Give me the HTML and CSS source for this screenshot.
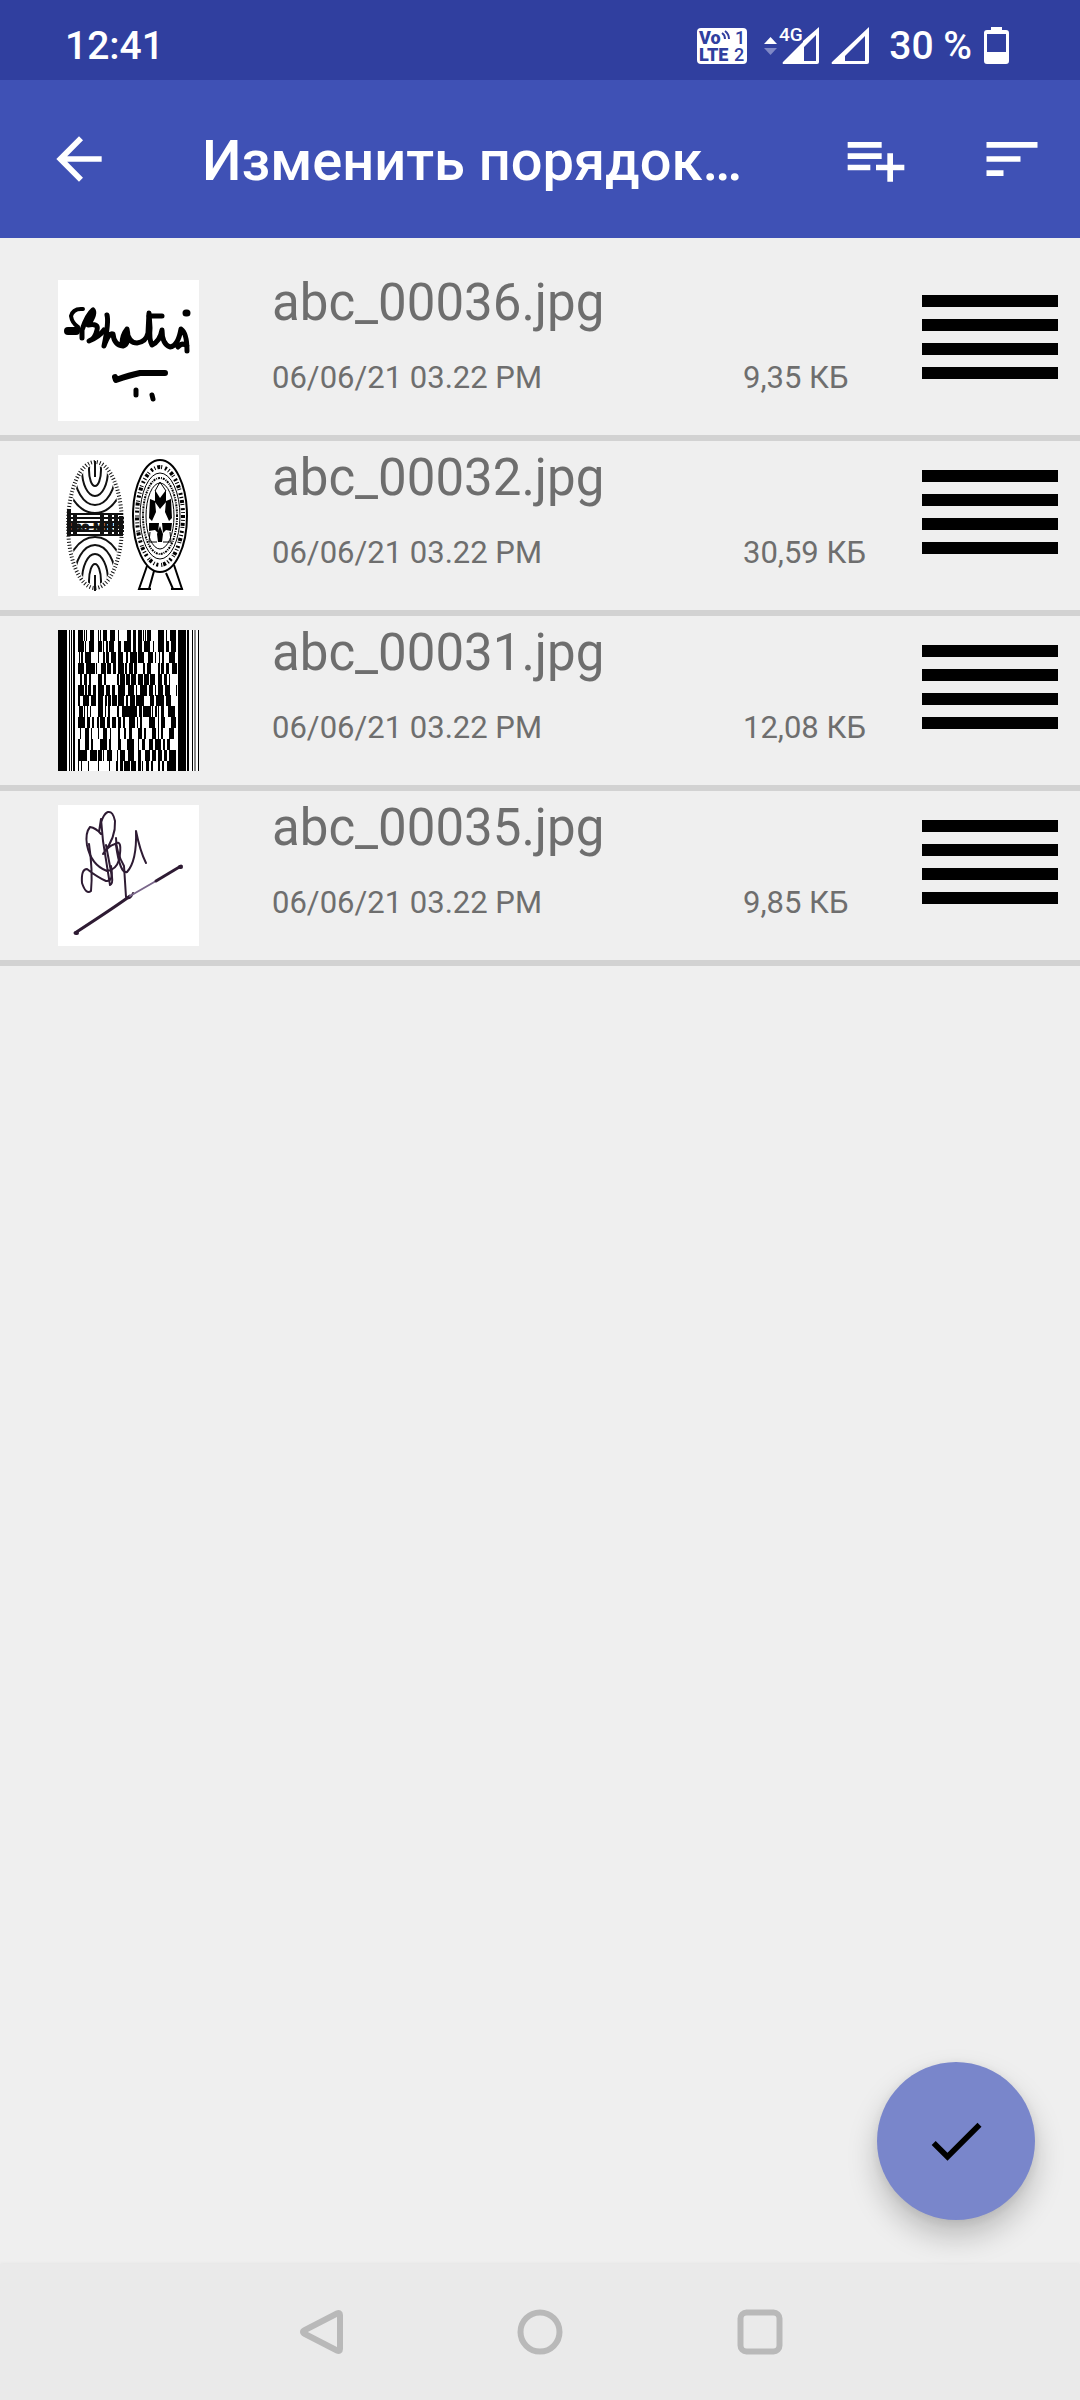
FILE: index.html
```
<!DOCTYPE html>
<html lang="ru">
<head>
    <meta charset="UTF-8">
    <meta name="viewport" content="width=device-width, initial-scale=1.0">
    <title>Изменить порядок</title>
    <link rel="stylesheet" href="styles.css">
</head>
<body>
    <div class="status-bar">
        <span class="clock">12:41</span>
        <div class="status-icons">
            <svg class="volte" width="50" height="36" viewBox="0 0 50 36">
                <rect width="50" height="36" rx="4" fill="#fff"/>
                <g fill="#303f9f" font-family="Roboto, sans-serif" font-weight="900">
                    <text x="2" y="16" font-size="18">Vo</text>
                    <text x="2" y="33" font-size="18">LTE</text>
                    <text x="38" y="16" font-size="18" font-weight="500">1</text>
                    <text x="37" y="33" font-size="18" font-weight="500">2</text>
                </g>
                <path d="M25 5q3 2 3 6M28 3q4 3 4 8" fill="none" stroke="#303f9f" stroke-width="2"/>
            </svg>
            <svg class="signal" width="56" height="38" viewBox="0 0 56 38">
                <path d="M0 17l6.500-7 6.500 7z" fill="#fff"/>
                <path d="M0 21h13l-6.500 7z" fill="#7f88c6"/>
                <text x="15" y="14" font-size="19" font-weight="500" font-family="Roboto, sans-serif" fill="#fff">4G</text>
                <path fill="#fff" fill-rule="evenodd" d="M55 0v35q0 2-2 2H19q-1-1 0-2L39 15V14zM52 8L40 20V34H52z"/>
            </svg>
            <svg class="signal2" width="38" height="38" viewBox="0 0 38 38">
                <path fill="#fff" fill-rule="evenodd" d="M38 0v35q0 2-2 2H1q-1-1 0-2zM34 9L14 29V34H34z"/>
            </svg>
            <span class="percent">30 %</span>
            <svg width="25" height="38" viewBox="0 0 25 38">
                <path fill="#fff" fill-rule="evenodd" d="M7 0h11v3h4q3 0 3 3v28q0 3-3 3H3q-3 0-3-3V6q0-3 3-3h4zM3 7v18h19V7z"/>
            </svg>
        </div>
    </div>

    <header class="app-bar">
        <button class="icon-btn" type="button" aria-label="Назад">
            <svg viewBox="0 0 24 24"><path d="M20 11H7.830l5.590-5.590L12 4l-8 8 8 8 1.410-1.410L7.830 13H20v-2z"/></svg>
        </button>
        <h1>Изменить порядок…</h1>
        <button class="icon-btn" type="button" aria-label="Добавить">
            <svg viewBox="0 0 24 24"><path d="M14 10H2v2h12v-2zm0-4H2v2h12V6zm4 8v-4h-2v4h-4v2h4v4h2v-4h4v-2h-4zM2 16h8v-2H2v2z"/></svg>
        </button>
        <button class="icon-btn sort" type="button" aria-label="Сортировать">
            <svg viewBox="0 0 24 24"><path d="M3 18h6v-2H3v2zM3 6v2h18V6H3zm0 7h12v-2H3v2z"/></svg>
        </button>
    </header>

    <main>
        <ul class="file-list">
            <li>
                <svg class="thumb" viewBox="0 0 141 141">
                    <!-- signature -->
                    <g fill="none" stroke="#000" stroke-linecap="round" stroke-linejoin="round">
                        <path stroke-width="4" d="M25 29Q15 28 13 36Q14 43 20 47Q22 51 9 51"/>
                        <path stroke-width="8" d="M10 51h8"/>
                        <path stroke-width="5" d="M24 58L24 50Q29 35 35 30Q38 34 30 45Q41 43 39 50Q37 59 31 61Q42 56 46 50"/>
                        <path stroke-width="5" d="M49 35Q51 42 46 66Q51 52 55 54Q56 65 65 66Q72 64 69 49Q64 55 64 64M69 52Q71 63 79 63Q88 62 90 53L91 33L92 48Q91 60 94 65Q102 61 104 50Q104 64 112 67Q120 66 123 49Q129 53 129 71M120 67Q124 62 129 66"/>
                        <path stroke-width="5" d="M91 36h13"/>
                        <path stroke-width="7" d="M128 33h1M66 60v3"/>
                        <path stroke-width="6" d="M57 97l1 3Q72 95 82 93H107"/>
                        <path stroke-width="5" d="M78 110v5M94 115l1 4"/>
                    </g>
                </svg>
                <div class="info">
                    <span class="name">abc_00036.jpg</span>
                    <div class="meta"><span class="date">06/06/21 03.22 PM</span><span class="size">9,35 КБ</span></div>
                </div>
                <button class="handle" type="button" aria-label="Переместить"><i></i><i></i><i></i><i></i></button>
            </li>
            <li>
                <svg class="thumb" viewBox="0 0 141 141">
                    <!-- round accreditation mark -->
                    <clipPath id="oval"><ellipse cx="37" cy="70" rx="24" ry="60"/></clipPath>
                    <g fill="none" stroke="#111">
                        <ellipse cx="37" cy="70" rx="27" ry="63" stroke-width="4" stroke-dasharray="1 2"/>
                        <g clip-path="url(#oval)" stroke-width="2">
                            <ellipse cx="37" cy="15" rx="6" ry="16"/>
                            <ellipse cx="37" cy="15" rx="13" ry="26"/>
                            <ellipse cx="37" cy="15" rx="21" ry="35"/>
                            <ellipse cx="37" cy="15" rx="30" ry="43"/>
                            <ellipse cx="37" cy="126" rx="6" ry="17"/>
                            <ellipse cx="37" cy="126" rx="13" ry="27"/>
                            <ellipse cx="37" cy="126" rx="21" ry="36"/>
                            <ellipse cx="37" cy="126" rx="30" ry="44"/>
                        </g>
                        <path stroke-width="2" d="M37 6v16M37 120v16"/>
                        <path stroke-width="2" d="M10 59h55M9 63h57M9 67h57M9 72h57M9 76h57M10 80h55"/>
                        <path stroke-width="4" d="M11 54v27M17 58v23M44 59v22M52 58v23M58 59v22M63 61v20"/>
                    </g>
                    <text class="mark" x="37" y="76" text-anchor="middle">ilac-MRA</text>
                    <!-- seal with a star -->
                    <g fill="none" stroke="#000">
                        <path stroke-width="2" d="M89 111L81 134H91L96 116M108 118L115 134H124L116 110"/>
                        <path stroke-width="2" d="M81 134h12M113 134h12"/>
                        <ellipse cx="102" cy="61" rx="27" ry="56" fill="#fff" stroke-width="2"/>
                        <ellipse cx="102" cy="61" rx="23" ry="49" stroke-width="4" stroke-dasharray="2 2 1 2 3 1 1 3"/>
                        <ellipse cx="102" cy="61" rx="20" ry="43"/>
                        <ellipse cx="102" cy="61" rx="17" ry="38" stroke-width="2" stroke-dasharray="1 1 2 1"/>
                        <ellipse cx="102" cy="61" rx="14" ry="33"/>
                        <path d="M97 36L102 27L108 36M92 77L91 87H99M112 77L113 87H105"/>
                    </g>
                    <path d="M97 35L102 43L108 35V47L102 54L97 47zM92 44L97 46L98 57L94 66L91 63zM113 44L108 46L107 57L111 66L114 63zM91 68H101L100 78L97 75L91 76zM104 68H114L113 76L108 75L105 78zM102 71L105 79L104 87H100L99 79z"/>
                </svg>
                <div class="info">
                    <span class="name">abc_00032.jpg</span>
                    <div class="meta"><span class="date">06/06/21 03.22 PM</span><span class="size">30,59 КБ</span></div>
                </div>
                <button class="handle" type="button" aria-label="Переместить"><i></i><i></i><i></i><i></i></button>
            </li>
            <li>
                <svg class="thumb" viewBox="0 0 141 141" shape-rendering="crispEdges">
                    <!-- stacked barcode: start and stop columns, then thirteen rows -->
                    <path d="M0 0h9v141H0zM11 0h1v141h-1zM13 0h1v141h-1zM15 0h2v141h-2zM120 0h8v141h-8zM129 0h2v141h-2zM134 0h1v141h-1zM140 0h1v141h-1z"/>
                    <path d="M136 0h2v141h-2z" fill="#888"/>
                    <g fill="none" stroke="#000" stroke-width="11">
                        <path d="M20 5h5M26 5h1M28 5h1M32 5h4M40 5h1M42 5h1M45 5h4M52 5h5M60 5h1M69 5h4M75 5h3M80 5h4M85 5h1M87 5h1M89 5h4M100 5h6M108 5h1M112 5h6"/>
                        <path d="M20 16h6M27 16h1M31 16h5M40 16h4M45 16h1M48 16h2M51 16h5M60 16h3M66 16h7M75 16h3M80 16h4M86 16h6M95 16h1M100 16h6M108 16h3M113 16h5"/>
                        <path d="M21 27h1M23 27h2M27 27h6M40 27h1M45 27h2M48 27h3M53 27h5M60 27h5M68 27h2M72 27h7M80 27h6M90 27h5M97 27h1M101 27h1M104 27h2M111 27h6"/>
                        <path d="M20 38h6M28 38h9M38 38h1M43 38h5M49 38h4M55 38h3M60 38h6M67 38h2M71 38h4M76 38h3M85 38h2M89 38h4M100 38h2M103 38h3M108 38h3M114 38h5"/>
                        <path d="M22 49h2M26 49h3M31 49h2M40 49h4M46 49h2M59 49h2M62 49h5M68 49h4M73 49h5M80 49h5M86 49h5M92 49h5M100 49h4M106 49h3M111 49h1"/>
                        <path d="M20 60h6M27 60h2M30 60h3M35 60h3M40 60h6M48 60h4M54 60h3M60 60h7M70 60h6M78 60h1M82 60h7M91 60h4M97 60h1M100 60h5M107 60h5M118 60h1"/>
                        <path d="M20 70h2M25 70h6M33 70h5M40 70h5M47 70h2M50 70h3M54 70h5M60 70h6M68 70h2M72 70h5M78 70h8M92 70h4M98 70h8M108 70h5"/>
                        <path d="M21 81h4M26 81h1M29 81h1M32 81h1M40 81h5M47 81h1M50 81h2M59 81h2M64 81h15M81 81h3M85 81h8M94 81h1M97 81h2M100 81h1M103 81h3M110 81h7"/>
                        <path d="M20 92h7M29 92h3M34 92h2M39 92h2M42 92h5M49 92h3M54 92h4M60 92h3M65 92h2M71 92h6M79 92h1M82 92h2M91 92h6M100 92h1M103 92h4M113 92h5"/>
                        <path d="M22 103h1M27 103h4M33 103h1M40 103h1M45 103h4M52 103h1M60 103h2M66 103h2M71 103h3M80 103h4M86 103h2M94 103h4M100 103h1M103 103h2M111 103h5"/>
                        <path d="M20 114h2M27 114h4M33 114h2M42 114h7M51 114h2M60 114h3M69 114h7M80 114h1M84 114h3M91 114h4M97 114h6M105 114h2M109 114h3"/>
                        <path d="M20 125h9M32 125h7M40 125h4M45 125h1M49 125h5M59 125h1M62 125h5M70 125h6M80 125h3M87 125h5M94 125h4M100 125h4M106 125h3M111 125h7"/>
                        <path d="M20 136h1M23 136h1M30 136h1M40 136h1M51 136h1M58 136h2M62 136h3M66 136h6M73 136h5M80 136h3M84 136h1M88 136h3M93 136h2M100 136h2M104 136h2M109 136h9"/>
                    </g>
                </svg>
                <div class="info">
                    <span class="name">abc_00031.jpg</span>
                    <div class="meta"><span class="date">06/06/21 03.22 PM</span><span class="size">12,08 КБ</span></div>
                </div>
                <button class="handle" type="button" aria-label="Переместить"><i></i><i></i><i></i><i></i></button>
            </li>
            <li>
                <svg class="thumb" viewBox="0 0 141 141">
                    <!-- pen signature -->
                    <g fill="none" stroke="#2e1b33" stroke-width="2" stroke-linecap="round" stroke-linejoin="round">
                        <path d="M43 29Q38 23 32 22Q27 28 29 40Q33 60 49 66Q58 65 61 55Q65 33 57 39Q50 41 45 49Q58 33 57 16Q55 6 50 7Q44 9 41 27L43 14M43 14L45 36L52 80Q55 79 54 72L48 40"/>
                        <path d="M31 39Q35 66 33 86Q28 90 24 78Q23 64 29 64Q39 72 48 76Q56 77 53 61M58 33Q58 47 66 61L68 92Q72 96 75 88"/>
                        <path d="M58 40Q62 69 69 67Q79 56 78 26Q82 46 88 58"/>
                        <path d="M17 128Q60 100 72 91" stroke-width="3"/>
                        <path d="M72 91L98 76" stroke="#79668a"/>
                        <path d="M98 76L123 61" stroke-width="3"/>
                        <path d="M18 128h1M122 62h1" stroke-width="4"/>
                    </g>
                </svg>
                <div class="info">
                    <span class="name">abc_00035.jpg</span>
                    <div class="meta"><span class="date">06/06/21 03.22 PM</span><span class="size">9,85 КБ</span></div>
                </div>
                <button class="handle" type="button" aria-label="Переместить"><i></i><i></i><i></i><i></i></button>
            </li>
        </ul>
    </main>

    <button class="fab" type="button" aria-label="Готово">
        <svg viewBox="0 0 24 24"><path d="M9 16.170L4.830 12l-1.420 1.410L9 19 21 7l-1.410-1.410z"/></svg>
    </button>

    <nav class="nav-bar">
        <button type="button" aria-label="Назад">
            <svg viewBox="0 0 46 46"><path d="M40 4.500Q43 3 43 6V40Q43 43 40 41.500L8 25Q4 23 8 21z" stroke-linejoin="round"/></svg>
        </button>
        <button type="button" aria-label="Домой">
            <svg viewBox="0 0 46 46"><circle cx="23" cy="23" r="19.500"/></svg>
        </button>
        <button type="button" aria-label="Недавние">
            <svg viewBox="0 0 46 46"><rect x="3.500" y="3.500" width="39" height="39" rx="6"/></svg>
        </button>
    </nav>
</body>
</html>
```
FILE: styles.css
```
* {
    box-sizing: border-box;
}

body {
    margin: 0;
    min-height: 100vh;
    display: flex;
    flex-direction: column;
    font-family: Roboto, sans-serif;
    background-color: #efefef;
    color: #6e6e6e;
}

button {
    padding: 0;
    border: none;
    background: none;
    cursor: pointer;
}

svg {
    display: block;
    flex-shrink: 0;
}

/* status bar */
.status-bar {
    height: 80px;
    padding: 12px 71px 0 65px;
    display: flex;
    justify-content: space-between;
    align-items: center;
    background-color: #303f9f;
    color: #fff;
    font-size: 39px;
    font-weight: 500;
}

.status-icons {
    display: flex;
    align-items: center;
}

.status-icons svg {
    overflow: visible;
}

.signal {
    margin-left: 17px;
}

.signal2 {
    margin-left: 11px;
}

.percent {
    margin: 0 12px 0 20px;
}

/* app bar */
.app-bar {
    height: 158px;
    padding: 0 34px 0 45px;
    display: flex;
    align-items: center;
    background-color: #3f51b5;
    color: #fff;
}

.app-bar h1 {
    flex: 1;
    margin: 0 0 0 89px;
    padding-top: 4px;
    font-size: 56px;
    line-height: 66px;
    font-weight: 500;
    white-space: nowrap;
    overflow: hidden;
    text-overflow: ellipsis;
}

.icon-btn svg {
    width: 68px;
    height: 68px;
    fill: #fff;
}

.sort {
    margin-left: 68px;
}

/* file list */
main {
    flex: 1;
}

.file-list {
    list-style: none;
    margin: 0;
    padding: 28px 0 0;
}

.file-list li {
    display: flex;
    align-items: flex-start;
    padding: 0 22px 14px 58px;
    border-bottom: 6px solid #d2d2d2;
}

.thumb {
    width: 141px;
    height: 141px;
    margin-top: 14px;
    background-color: #fff;
}

.mark {
    font-family: "Liberation Sans Narrow", "Liberation Sans", sans-serif;
    font-size: 13px;
    font-weight: bold;
    fill: #111;
    stroke: #111;
}

.info {
    flex: 1;
    margin-left: 73px;
    padding-top: 7px;
}

.name {
    display: block;
    font-size: 51px;
    line-height: 60px;
}

.meta {
    display: flex;
    margin-top: 27px;
    font-size: 31px;
    line-height: 36px;
}

.date {
    flex: 1;
}

.size {
    width: 179px;
}

.handle {
    width: 136px;
    height: 84px;
    margin-top: 29px;
    display: flex;
    flex-direction: column;
    justify-content: space-between;
}

.handle i {
    width: 100%;
    height: 12px;
    background-color: #000;
}

.fab {
    position: fixed;
    right: 45px;
    bottom: 180px;
    width: 158px;
    height: 158px;
    display: flex;
    justify-content: center;
    align-items: center;
    border-radius: 50%;
    background-color: #7986cb;
    box-shadow: 0 16px 30px rgba(0, 0, 0, 0.22), 0 2px 12px rgba(0, 0, 0, 0.08);
}

.fab svg {
    width: 68px;
    height: 68px;
}

/* system navigation */
.nav-bar {
    height: 136px;
    display: flex;
    justify-content: center;
    align-items: center;
    gap: 174px;
    background-color: #eaeaea;
    box-shadow: 0 -1px 3px rgba(0, 0, 0, 0.04);
}

.nav-bar svg {
    width: 46px;
    height: 46px;
    fill: none;
    stroke: #b9b9b9;
    stroke-width: 6px;
}
```
